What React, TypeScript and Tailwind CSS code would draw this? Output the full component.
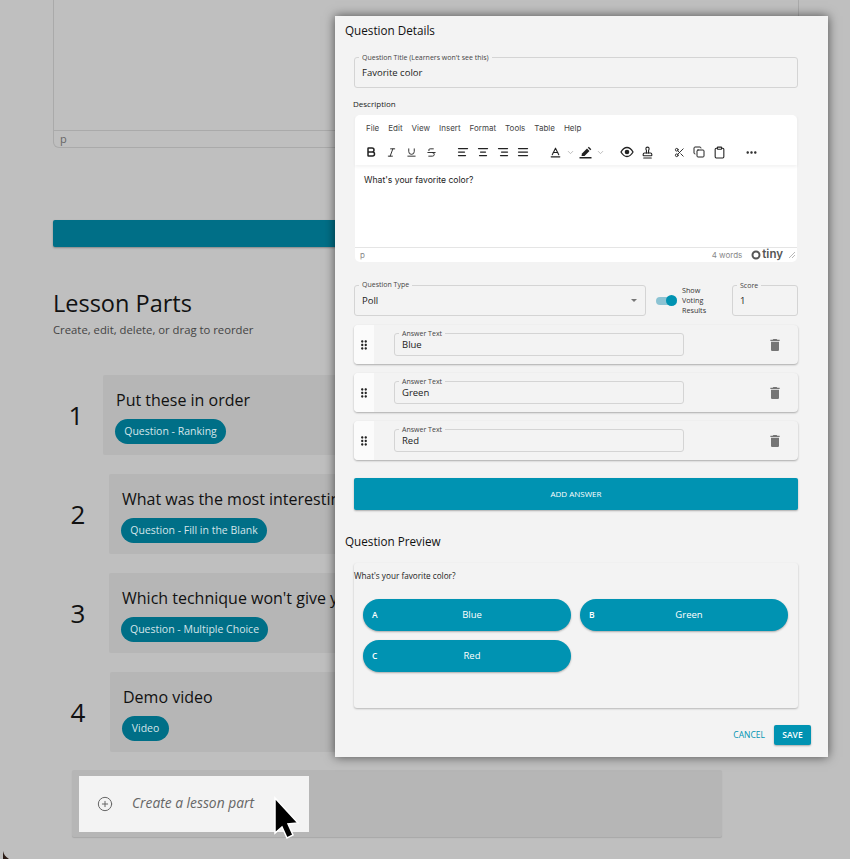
import {
  AlignCenter,
  AlignJustify,
  AlignLeft,
  AlignRight,
  Baseline,
  Bold,
  ChevronDown,
  CirclePlus,
  Clipboard,
  Copy,
  Italic,
  MoreHorizontal,
  Scissors,
  Stamp,
  Strikethrough,
  Underline,
} from "lucide-react";
import type { ReactNode } from "react";

const ToolIcon = ({ children, narrow }: { children: ReactNode; narrow?: boolean }) => (
  <div className={narrow ? "flex w-[10px] items-center justify-center" : "flex w-5 items-center justify-center"}>
    {children}
  </div>
);

const Field = ({ label, value, className }: { label: string; value: string; className: string }) => (
  <div className={`relative flex items-center rounded-[3px] border border-[#d4d4d4] ${className}`}>
    <span className="absolute -top-[5px] left-[4px] bg-[#f3f3f3] px-[3px] text-[7px] leading-[9px] text-[#444]">
      {label}
    </span>
    <span className="pl-[7px] pt-px text-[9.500px] text-[#222]">{value}</span>
  </div>
);

const AnswerCard = ({ value }: { value: string }) => (
  <div className="flex h-[39px] items-center rounded-[4px] bg-[#f3f3f3] shadow-[0_1px_2px_rgba(0,0,0,0.3)]">
    <div className="flex h-full w-5 items-center justify-center rounded-l-[4px] bg-[#fbfbfb]">
      <svg width="14" height="14" viewBox="0 0 24 24" fill="#222">
        <path d="M11 18c0 1.100-.9 2-2 2s-2-.9-2-2 .9-2 2-2 2 .9 2 2zm-2-8c-1.100 0-2 .9-2 2s.9 2 2 2 2-.9 2-2-.9-2-2-2zm0-6c-1.100 0-2 .9-2 2s.9 2 2 2 2-.9 2-2-.9-2-2-2zm6 4c1.100 0 2-.9 2-2s-.9-2-2-2-2 .9-2 2 .9 2 2 2zm0 2c-1.100 0-2 .9-2 2s.9 2 2 2 2-.9 2-2-.9-2-2-2zm0 6c-1.100 0-2 .9-2 2s.9 2 2 2 2-.9 2-2-.9-2-2-2z" />
      </svg>
    </div>
    <Field label="Answer Text" value={value} className="ml-5 h-[23px] w-[290px]" />
    <svg className="ml-auto mr-[15px]" width="16" height="16" viewBox="0 0 24 24" fill="#757575">
      <path d="M6 19c0 1.100.9 2 2 2h8c1.100 0 2-.9 2-2V7H6v12zM19 4h-3.500l-1-1h-5l-1 1H5v2h14V4z" />
    </svg>
  </div>
);

const AnswerPill = ({ letter, text }: { letter: string; text: string }) => (
  <div className="flex h-[32px] w-[208px] items-center rounded-full bg-[#0093b2] pl-[9px] pr-[8px] text-white shadow-[0_1px_2px_rgba(0,0,0,0.3)]">
    <span className="w-[9px] text-[8.500px] font-semibold">{letter}</span>
    <span className="flex-1 text-center text-[9.500px] font-medium">{text}</span>
  </div>
);

const LessonRow = ({
  num,
  title,
  tag,
  numClass,
  tagClass,
}: {
  num: number;
  title: string;
  tag: string;
  numClass: string;
  tagClass: string;
}) => (
  <div className="flex h-[80px] items-center">
    <div className={`text-center text-[26px] text-[#111] ${numClass}`}>{num}</div>
    <div className="flex h-full w-[680px] flex-col justify-center rounded-[2px] bg-[#b6b6b6] pl-3 pt-[4px]">
      <div className="whitespace-nowrap pl-px text-[16px] font-medium leading-5 text-[#111]">{title}</div>
      <div className={`mt-[9px] flex h-[25px] items-center justify-center rounded-full bg-[#006f87] text-[10.500px] text-[#d5e5ea] ${tagClass}`}>
        {tag}
      </div>
    </div>
  </div>
);

export default function App() {
  return (
    <div className="relative h-[859px] w-[850px] overflow-hidden bg-[#bfbfbf] pl-[53px] font-['Open_Sans',sans-serif]">
      {/* page behind the dialog */}
      <div className="flex h-[148px] w-[746px] flex-col justify-end rounded-b-[6px] border border-t-0 border-[#aaa]">
        <div className="h-[17px] border-t border-[#aaa] pl-[6px] text-[11px] leading-[15px] text-[#666]">p</div>
      </div>
      <div className="mt-[72px] h-[27px] w-[745px] rounded-[2px] bg-[#006f87] shadow-[0_1px_2px_rgba(0,0,0,0.3)]" />
      <h1 className="mt-[40px] text-[23.500px] leading-[32px] text-[#111]">Lesson Parts</h1>
      <p className="mt-[3px] text-[11.300px] leading-[16px] text-[#444]">Create, edit, delete, or drag to reorder</p>
      <div className="mt-[37px] flex flex-col gap-[19px]">
        <LessonRow num={1} title="Put these in order" tag="Question - Ranking" numClass="mr-[4px] w-[46px]" tagClass="w-[111px]" />
        <LessonRow num={2} title="What was the most interesting part of the lesson?" tag="Question - Fill in the Blank" numClass="mr-[6px] w-[50px]" tagClass="w-[146px]" />
        <LessonRow num={3} title="Which technique won't give you good results?" tag="Question - Multiple Choice" numClass="mr-[6px] w-[50px]" tagClass="w-[147px]" />
        <LessonRow num={4} title="Demo video" tag="Video" numClass="mr-[7px] w-[50px]" tagClass="w-[47px]" />
      </div>
      <div className="ml-[19px] mt-[18px] flex h-[67px] w-[650px] items-center rounded-[2px] bg-[#b6b6b6] pl-[7px] shadow-[0_1px_1px_rgba(0,0,0,0.12)]">
        <div className="relative flex h-[56px] w-[230px] items-center bg-[#f3f3f3] pl-[18px] text-[#666]">
          <CirclePlus size={16} strokeWidth={1.500} />
          <span className="ml-[19px] text-[13.800px] italic">Create a lesson part</span>
          <svg className="absolute left-[194px] top-[20px]" width="28" height="44" viewBox="0 0 28 44">
            <path d="M2 2 L2 37 L9 31 L14 42 L20 39 L15 28 L25 27 Z" fill="#000" stroke="#fff" strokeWidth="1.500" />
          </svg>
        </div>
      </div>

      {/* dark window corner */}
      <svg className="absolute bottom-0 left-0" width="12" height="9" viewBox="0 0 12 9">
        <path d="M3 1 C3.500 4 5.500 7 9 9 L3 9 Z" fill="#2a1a14" />
      </svg>

      {/* dialog */}
      <div className="absolute left-[335px] top-[16px] h-[741px] w-[493px] bg-[#f3f3f3] pl-[19px] pr-[30px] shadow-[0_0_10px_rgba(0,0,0,0.6)]">
        <h2 className="-ml-[9px] h-[28px] text-[11.700px] font-medium leading-[28px] text-[#111]">Question Details</h2>
        <Field label="Question Title (Learners won't see this)" value="Favorite color" className="mt-[13px] h-[31px]" />
        <div className="-ml-px mt-[9px] h-[13px] text-[8px] leading-[13px] text-[#222]">Description</div>

        <div className="mx-px mt-[5px] flex h-[147px] flex-col rounded-[5px] bg-white font-['Inter',sans-serif]">
          <div className="flex h-[50px] flex-col shadow-[0_2px_3px_rgba(0,0,0,0.05)]">
            <div className="flex gap-[9px] pl-[11px] pt-[7px] text-[8px] leading-[13px] text-[#444]">
              <span>File</span>
              <span>Edit</span>
              <span>View</span>
              <span>Insert</span>
              <span>Format</span>
              <span>Tools</span>
              <span>Table</span>
              <span>Help</span>
            </div>
            <div className="mt-[10px] flex pl-[6px] text-[#222]">
              <ToolIcon><Bold size={12} strokeWidth={3} /></ToolIcon>
              <ToolIcon><Italic size={11} /></ToolIcon>
              <ToolIcon><Underline size={11} /></ToolIcon>
              <ToolIcon><Strikethrough size={11} /></ToolIcon>
              <div className="ml-3" />
              <ToolIcon><AlignLeft size={12} strokeWidth={2.500} /></ToolIcon>
              <ToolIcon><AlignCenter size={12} strokeWidth={2.500} /></ToolIcon>
              <ToolIcon><AlignRight size={12} strokeWidth={2.500} /></ToolIcon>
              <ToolIcon><AlignJustify size={12} strokeWidth={2.500} /></ToolIcon>
              <div className="ml-3" />
              <ToolIcon><Baseline size={13} /></ToolIcon>
              <ToolIcon narrow><ChevronDown size={9} className="text-[#aaa]" /></ToolIcon>
              <ToolIcon>
                <svg width="13" height="13" viewBox="0 0 13 13" fill="#222">
                  <path d="M3 7.500 L8 2.500 L10.500 5 L5.500 10 L2.500 10 Z" />
                  <path d="M8.800 1.700 L9.800 0.700 L12.300 3.200 L11.300 4.200 Z" />
                  <rect x="0.500" y="11" width="12" height="1.500" />
                </svg>
              </ToolIcon>
              <ToolIcon narrow><ChevronDown size={9} className="text-[#aaa]" /></ToolIcon>
              <div className="ml-3" />
              <ToolIcon>
                <svg width="14" height="14" viewBox="0 0 14 14" fill="none" stroke="#222" strokeWidth="1.300">
                  <path d="M1 7 C3 3.500 5 2.500 7 2.500 C9 2.500 11 3.500 13 7 C11 10.500 9 11.500 7 11.500 C5 11.500 3 10.500 1 7 Z" />
                  <circle cx="7" cy="7" r="2.300" fill="#222" stroke="none" />
                </svg>
              </ToolIcon>
              <ToolIcon><Stamp size={13} /></ToolIcon>
              <div className="ml-3" />
              <ToolIcon><Scissors size={11} /></ToolIcon>
              <ToolIcon><Copy size={12} /></ToolIcon>
              <ToolIcon><Clipboard size={13} /></ToolIcon>
              <div className="ml-3" />
              <ToolIcon><MoreHorizontal size={13} strokeWidth={2.500} /></ToolIcon>
            </div>
          </div>
          <div className="flex-1 pl-[9px] pt-[8px] text-[8.600px] leading-[14px] text-[#222]">What's your favorite color?</div>
          <div className="flex h-[15px] items-center border-t border-[#e5e5e5] pl-[5px] pr-[2px] text-[8px] text-[#888]">
            <span>p</span>
            <span className="ml-auto">4 words</span>
            <svg className="ml-[9px]" width="10" height="10" viewBox="0 0 10 10">
              <circle cx="5" cy="5" r="3.500" fill="none" stroke="#555" strokeWidth="2" />
            </svg>
            <span className="ml-px text-[11.500px] font-semibold leading-none text-[#555]">tiny</span>
            <svg className="ml-[6px]" width="6" height="6" viewBox="0 0 6 6" stroke="#999" strokeWidth="0.700">
              <path d="M0 6L6 0M3 6L6 3" />
            </svg>
          </div>
        </div>

        <div className="mt-[23px] flex h-[31px]">
          <div className="relative flex w-[292px] items-center rounded-[3px] border border-[#d4d4d4]">
            <span className="absolute -top-[6px] left-[4px] bg-[#f3f3f3] px-[3px] text-[7px] leading-[10px] text-[#444]">Question Type</span>
            <span className="pl-[7px] pt-px text-[9.500px] text-[#222]">Poll</span>
            <div className="ml-auto mr-[8px] h-0 w-0 border-x-[3px] border-t-[3px] border-x-transparent border-t-[#777]" />
          </div>
          <div className="relative ml-[10px] w-[21px] self-center">
            <div className="h-[8px] rounded-full bg-[#8cc3d3]" />
            <div className="absolute -top-[2px] right-0 h-[11px] w-[11px] rounded-full bg-[#0093b2]" />
          </div>
          <div className="ml-[5px] w-[40px] text-[7.200px] leading-[10px] text-[#333]">
            Show Voting Results
          </div>
          <Field label="Score" value="1" className="ml-auto w-[66px]" />
        </div>

        <div className="mt-[9px] flex flex-col gap-[9px]">
          <AnswerCard value="Blue" />
          <AnswerCard value="Green" />
          <AnswerCard value="Red" />
        </div>

        <div className="mt-[18px] flex h-[32px] items-center justify-center rounded-[2px] bg-[#0093b2] text-[8px] font-medium text-white shadow-[0_1px_2px_rgba(0,0,0,0.3)]">
          ADD ANSWER
        </div>

        <h2 className="-ml-[9px] mt-[21px] h-[20px] text-[11.700px] font-medium leading-[20px] text-[#111]">Question Preview</h2>

        <div className="mt-[12px] h-[145px] rounded-[3px] bg-[#f3f3f3] shadow-[0_1px_2px_rgba(0,0,0,0.25)]">
          <div className="pt-[7px] text-[8.200px] leading-[12px] text-[#222]">What's your favorite color?</div>
          <div className="mt-[17px] flex flex-wrap gap-[9px] pl-[9px]">
            <AnswerPill letter="A" text="Blue" />
            <AnswerPill letter="B" text="Green" />
            <AnswerPill letter="C" text="Red" />
          </div>
        </div>

        <div className="-mr-[13px] mt-[17px] flex h-[20px] items-center justify-end">
          <span className="text-[8.500px] font-medium text-[#0093b2]">CANCEL</span>
          <div className="ml-[9px] flex h-[20px] w-[37px] items-center justify-center rounded-[2px] bg-[#0093b2] text-[8.500px] font-semibold text-white shadow-[0_1px_2px_rgba(0,0,0,0.3)]">
            SAVE
          </div>
        </div>
      </div>
    </div>
  );
}
